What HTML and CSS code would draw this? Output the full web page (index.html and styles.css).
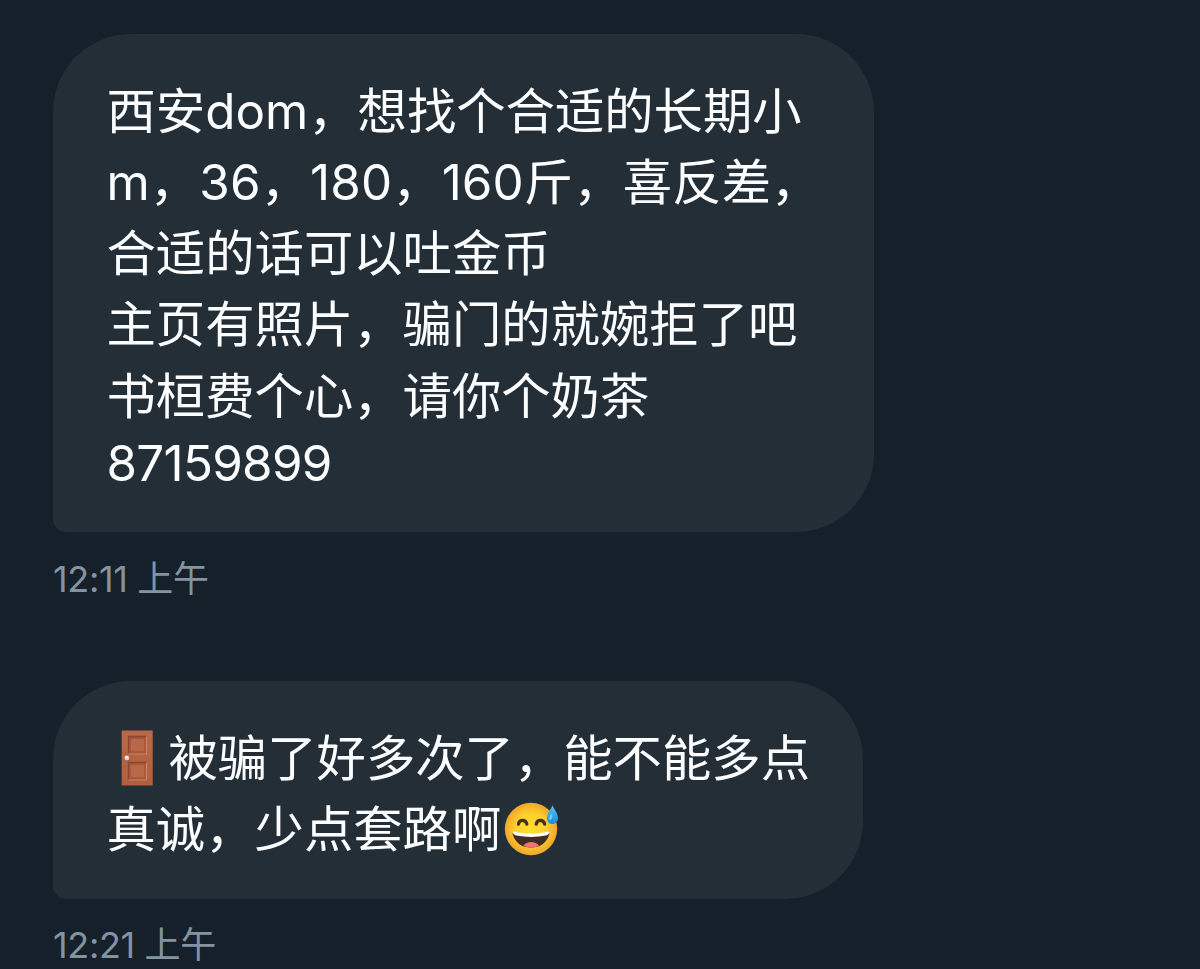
FILE: index.html
```html
<!DOCTYPE html>
<html lang="zh-CN">
<head>
<meta charset="utf-8">
<title>消息</title>
<link rel="stylesheet" href="styles.css">
</head>
<body>
<main class="chat">
  <section class="message">
    <div class="bubble bubble-long">
      <p class="line">西安dom，想找个合适的长期小</p>
      <p class="line line-stats">m，36，180，160斤，喜反差，</p>
      <p class="line">合适的话可以吐金币</p>
      <p class="line">主页有照片，骗门的就婉拒了吧</p>
      <p class="line">书桓费个心，请你个奶茶</p>
      <p class="line line-digits">87159899</p>
    </div>
    <time class="time">12:11 上午</time>
  </section>
  <section class="message">
    <div class="bubble bubble-short">
      <p class="line"><svg class="emoji door" viewBox="0 0 62 56" role="img" aria-label="门">
        <defs><linearGradient id="wood" x2="0" y2="1"><stop stop-color="#b9694a"/><stop offset="1" stop-color="#b15f3b"/></linearGradient></defs>
        <path fill="url(#wood)" d="M14.700 .5h31v55h-31z"/>
        <path fill="#a9593b" d="M21 6h18.500v18H21zM21 32h18.500v18H21z"/>
        <path fill="none" stroke="#8b4631" stroke-width="1.300" d="M21.500 24V6.500h18M21.500 50V32.500h18"/>
        <path fill="none" stroke="#d18261" stroke-width="1.200" d="M21.500 24h18V6.500M21.500 50h18V32.500"/>
        <path fill="#b9694a" d="M24 9h13v12H24zM24 35h13v12H24z"/>
        <circle cx="20.500" cy="28.500" r="2.800" fill="#854934"/>
        <circle cx="20" cy="28" r="2.500" fill="#e1c4b7"/><circle cx="19.500" cy="27.300" r="1.200" fill="#fff"/>
      </svg>被骗了好多次了，能不能多点</p>
      <p class="line">真诚，少点套路啊<svg class="emoji smile" viewBox="0 0 60 56" role="img" aria-label="苦笑">
        <defs>
          <radialGradient id="face"><stop stop-color="#ffdf30"/><stop offset=".6" stop-color="#fdd02d"/><stop offset="1" stop-color="#efa52c"/></radialGradient>
          <linearGradient id="drop" x2="0" y2="1"><stop stop-color="#64bce5"/><stop offset=".65" stop-color="#29a5ec"/><stop offset="1" stop-color="#168cde"/></linearGradient>
        </defs>
        <circle cx="30" cy="28" r="26.200" fill="url(#face)"/>
        <path fill="none" stroke="#443023" stroke-width="3.200" stroke-linecap="round" d="M17.400 23.200c1-5 7.300-5 8.500 0M35.200 23.200c1-5 7.300-5 8.500 0"/>
        <path fill="#422b23" d="M13 31c11 3 23 3 34 0 1.200 0 1.600 1 1.200 2.500C45.800 42 39 46.500 30 46.500s-15.800-4.500-18.200-13c-.4-1.500 0-2.500 1.200-2.500z"/>
        <path fill="#ed7770" d="M22.500 44.800c3-5 12.500-5 15.500 0-4.500 2.200-11 2.200-15.500 0z"/>
        <path fill="#fff" d="M13 30.500c11.500 2.800 23 2.800 34.200 0 1 0 1.400.9 1 1.800-.7 1.300-2 2-3.600 2.300-9 1.700-20 1.700-29 0-1.600-.3-3-1-3.600-2.300-.3-1 0-1.800 1-1.800z"/>
        <path fill="url(#drop)" d="M51.500 4.300c-1.400 4-5.600 8-5.600 12.400 0 3.700 2 6.300 5.400 6.300s5.700-2.500 5.700-6.300c0-4.400-4.100-8.400-5.500-12.400z"/>
        <path fill="#72caf4" d="M48.500 16c-1 3 .5 4 2 2s.5-5.500-.3-5-1.200 1.400-1.700 3z"/>
      </svg></p>
    </div>
    <time class="time">12:21 上午</time>
  </section>
</main>
</body>
</html>
```
FILE: styles.css
```css
* {
  box-sizing: border-box;
}

body {
  margin: 0;
  background: #16202a;
  font-family: Inter, "Noto Sans CJK SC", sans-serif;
}

.chat {
  display: flex;
  flex-direction: column;
  gap: 75px;
  height: 969px;
  padding: 34px 0 0 53px;
  overflow: hidden;
}

.message {
  display: flex;
  flex-direction: column;
  align-items: flex-start;
  gap: 20.500px;
}

.bubble {
  flex: none;
  padding: 41.500px 0 0 53.500px;
  border-radius: 78px 78px 78px 13px;
  background: #242e36;
  color: #fbfdff;
}

.bubble-long {
  width: 821px;
  height: 498px;
}

.bubble-short {
  width: 810px;
  height: 218px;
  padding-top: 42px;
}

.line {
  margin: 0;
  font-size: 49.350px;
  line-height: 71.300px;
  white-space: nowrap;
}

.line-stats {
  letter-spacing: .12px;
}

.line-digits {
  margin-top: -4.300px;
  letter-spacing: -.7px;
}

.emoji {
  display: inline-block;
  height: 56px;
  vertical-align: 0;
  margin-block: -10px;
}

.door {
  width: 62px;
}

.smile {
  width: 60px;
}

.time {
  height: 53px;
  color: #8493a0;
  font-size: 36px;
  font-weight: 400;
  letter-spacing: -.35px;
  line-height: 52px;
  white-space: nowrap;
}
```
